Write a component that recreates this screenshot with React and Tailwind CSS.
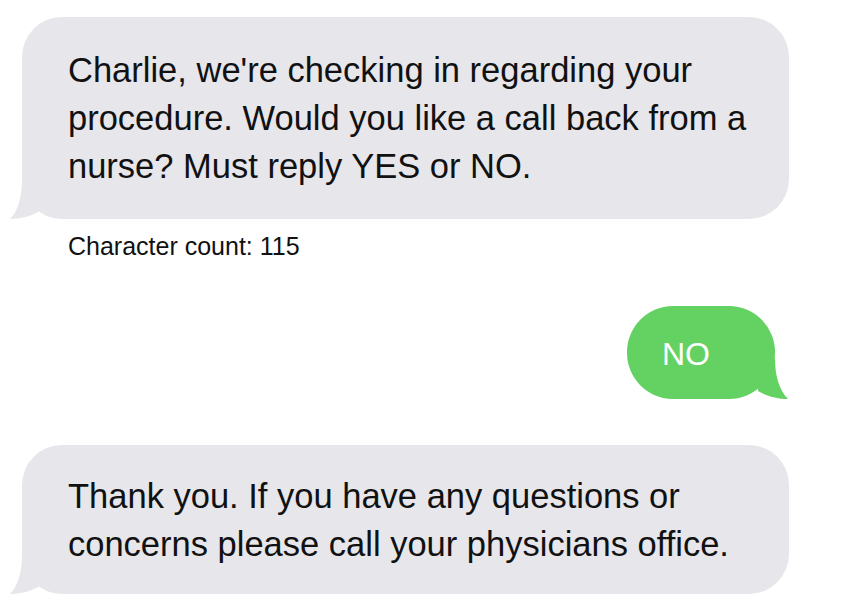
export default function App() {
  return (
    <div className="min-h-screen w-[849px] bg-white font-['Liberation_Sans',Arial,sans-serif] text-[#111]">
      <div className="flex flex-col pt-[17px]">
        <div className="relative ml-[22px] w-[767px] whitespace-nowrap rounded-[40px] bg-[#e6e6eb] pl-[46px] pt-[29px] pb-[29px] text-[34.5px] leading-[48px]">
          Charlie, we're checking in regarding your
          <br />
          procedure. Would you like a call back from a
          <br />
          nurse? Must reply YES or NO.
          <svg className="absolute -left-[12px] bottom-0" width="40" height="40" viewBox="0 0 40 40">
            <path d="M12 0 C12 18 8 32 0 40 C10 40 22 37 30 32 L30 0 Z" fill="#e6e6eb" />
          </svg>
        </div>
        <p className="ml-[68px] mt-[13px] text-[25px] leading-[28px]">Character count: 115</p>

        <div className="relative mt-[46px] mr-[74px] flex h-[93px] w-[148px] items-center self-end rounded-[46px] bg-[#63d262] pl-[35px] pt-[3px] text-[32px] text-white">
          NO
          <svg className="absolute -right-[14px] bottom-0" width="40" height="40" viewBox="0 0 40 40">
            <path d="M26 0 C26 18 31 32 39 40 C29 40 17 37 9 32 L9 0 Z" fill="#63d262" />
          </svg>
        </div>

        <div className="relative mt-[46px] ml-[22px] w-[767px] whitespace-nowrap rounded-[40px] bg-[#e6e6eb] pl-[46px] pt-[27px] pb-[26px] text-[34.5px] leading-[48px]">
          Thank you. If you have any questions or
          <br />
          concerns please call your physicians office.
          <svg className="absolute -left-[12px] bottom-0" width="40" height="40" viewBox="0 0 40 40">
            <path d="M12 0 C12 18 8 32 0 40 C10 40 22 37 30 32 L30 0 Z" fill="#e6e6eb" />
          </svg>
        </div>
      </div>
    </div>
  );
}
